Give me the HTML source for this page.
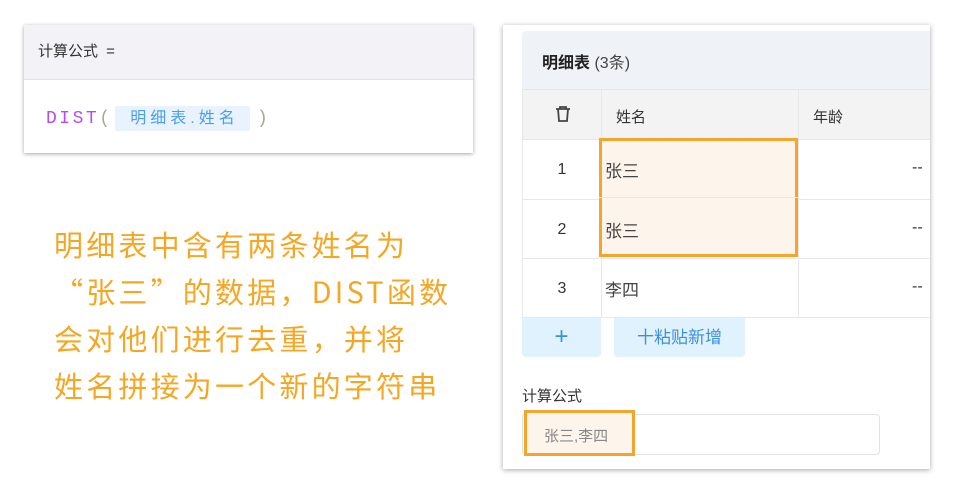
<!DOCTYPE html>
<html><head><meta charset="utf-8"><style>
*{margin:0;padding:0;box-sizing:border-box}
body{width:960px;height:497px;background:#fff;position:relative;overflow:hidden;font-family:"Liberation Sans","Noto Sans CJK SC",sans-serif;color:#333}
.a{position:absolute}
</style></head><body>
<div class="a" style="left:24px;top:25px;width:449px;height:128px;background:#fff;box-shadow:0 1px 4px rgba(0,0,0,.35)">
 <div class="a" style="left:0;top:0;width:449px;height:55px;background:#f3f3f7;border-bottom:1px solid #e2e2e6"></div>
 <div class="a" style="left:14px;top:15px;font-size:15px;color:#333">计算公式 <span style="margin-left:4px">=</span></div>
 <div class="a" style="left:22px;top:84px;font-family:'Liberation Mono','Noto Sans CJK SC',monospace;font-size:18px;letter-spacing:2.5px;color:#b44cf0">DIST<span style="color:#a8a896">(</span></div>
 <div class="a" style="left:91px;top:81px;width:135px;height:25px;background:#e8f3ff;border-radius:2px;color:#4c9ef0;font-size:16px;line-height:25px;text-align:center;letter-spacing:4px;padding-left:4px">明细表.姓名</div>
 <div class="a" style="left:233px;top:84px;font-family:'Liberation Mono',monospace;font-size:18px;color:#a8a896">)</div>
</div>
<div class="a" style="left:54px;top:221px;font-family:'Noto Sans CJK SC',sans-serif;font-size:29px;letter-spacing:3.2px;line-height:47px;color:#f5a623;white-space:nowrap">明细表中含有两条姓名为<br>“张三”的数据，DIST函数<br>会对他们进行去重，并将<br>姓名拼接为一个新的字符串</div>
<div class="a" style="left:503px;top:25px;width:427px;height:444px;background:#fff;box-shadow:0 1px 5px rgba(0,0,0,.35);overflow:hidden">
 <div class="a" style="left:19px;top:6px;width:420px;height:58px;background:#eff2f7;border-radius:4px 0 0 0"></div>
 <div class="a" style="left:39px;top:24px;font-size:16px;color:#222"><b>明细表</b> <span style="color:#444">(3条)</span></div>
 <div class="a" style="left:19px;top:64px;width:420px;height:50px;background:#f3f3f3;border-top:1px solid #e6e6e6"></div>
 <div class="a" style="left:19px;top:64px;width:1px;height:229px;background:#e8e8e8"></div>
 <div class="a" style="left:98px;top:64px;width:1px;height:229px;background:#e8e8e8"></div>
 <div class="a" style="left:295px;top:64px;width:1px;height:229px;background:#e8e8e8"></div>
 <div class="a" style="left:19px;top:114px;width:420px;height:1px;background:#e8e8e8"></div>
 <div class="a" style="left:19px;top:174px;width:420px;height:1px;background:#e8e8e8"></div>
 <div class="a" style="left:19px;top:233px;width:420px;height:1px;background:#e8e8e8"></div>
 <div class="a" style="left:19px;top:292px;width:420px;height:1px;background:#e8e8e8"></div>
 <svg class="a" style="left:51px;top:80px" width="18" height="18" viewBox="0 0 18 18" fill="none" stroke="#444" stroke-width="1.8"><path d="M2 4h14M6 4V2h6v2M4 4l1 12h8l1-12"/></svg>
 <div class="a" style="left:113px;top:81px;font-size:15px">姓名</div>
 <div class="a" style="left:310px;top:81px;font-size:15px">年龄</div>
 <div class="a" style="left:96px;top:113px;width:199px;height:119px;background:#fdf5ec;border:3px solid #f5a52d"></div>
 <div class="a" style="left:96px;top:172px;width:199px;height:1px;background:#efe6dc"></div>
 <div class="a" style="left:19px;top:136px;width:80px;text-align:center;font-size:16px">1</div>
 <div class="a" style="left:19px;top:196px;width:80px;text-align:center;font-size:16px">2</div>
 <div class="a" style="left:19px;top:255px;width:80px;text-align:center;font-size:16px">3</div>
 <div class="a" style="left:102px;top:132px;font-size:17px;color:#444">张三</div>
 <div class="a" style="left:102px;top:192px;font-size:17px;color:#444">张三</div>
 <div class="a" style="left:102px;top:251px;font-size:17px;color:#444">李四</div>
 <div class="a" style="left:409px;top:134px;font-size:16px">--</div>
 <div class="a" style="left:409px;top:194px;font-size:16px">--</div>
 <div class="a" style="left:409px;top:253px;font-size:16px">--</div>
 <div class="a" style="left:19px;top:293px;width:79px;height:39px;background:#dff2fd;border-radius:0 0 4px 4px;color:#3d8fe0;font-size:24px;text-align:center;line-height:37px">+</div>
 <div class="a" style="left:111px;top:293px;width:131px;height:39px;background:#dff2fd;border-radius:0 0 4px 4px;color:#3d8fe0;font-size:17px;text-align:center;line-height:39px">十粘贴新增</div>
 <div class="a" style="left:19px;top:360px;font-size:15px;color:#333">计算公式</div>
 <div class="a" style="left:19px;top:389px;width:358px;height:41px;border:1px solid #e2e2e2;border-radius:4px"></div>
 <div class="a" style="left:21px;top:385px;width:111px;height:46px;background:#fdf5ec;border:3px solid #f5a52d;color:#888;font-size:15px;padding:12px 0 0 17px">张三,李四</div>
</div>
</body></html>
